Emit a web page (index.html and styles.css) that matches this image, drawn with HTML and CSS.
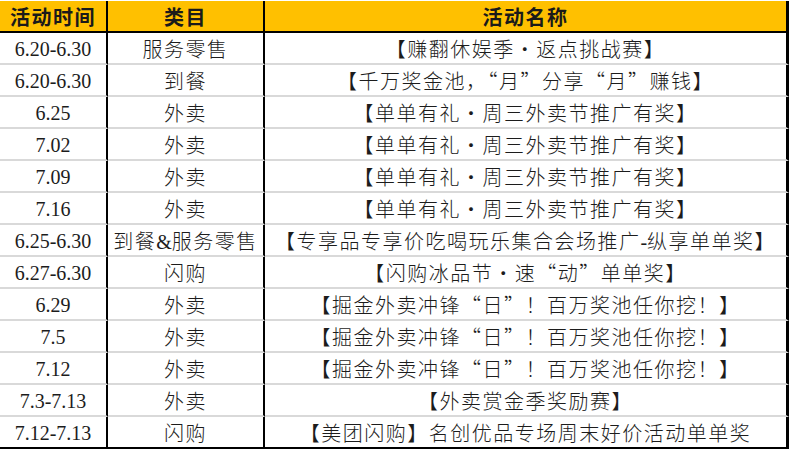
FILE: index.html
```html
<!DOCTYPE html>
<html lang="zh-CN">
<head>
<meta charset="utf-8">
<link rel="stylesheet" href="styles.css">
</head>
<body>
<table class="sheet">
  <thead>
    <tr>
      <th class="c1">活动时间</th>
      <th class="c2">类目</th>
      <th class="c3">活动名称</th>
    </tr>
  </thead>
  <tbody>
    <tr><td class="c1">6.20-6.30</td><td class="c2">服务零售</td><td class="c3">【赚翻休娱季·返点挑战赛】</td></tr>
    <tr><td class="c1">6.20-6.30</td><td class="c2">到餐</td><td class="c3">【千万奖金池，“月”分享“月”赚钱】</td></tr>
    <tr><td class="c1">6.25</td><td class="c2">外卖</td><td class="c3">【单单有礼·周三外卖节推广有奖】</td></tr>
    <tr><td class="c1">7.02</td><td class="c2">外卖</td><td class="c3">【单单有礼·周三外卖节推广有奖】</td></tr>
    <tr><td class="c1">7.09</td><td class="c2">外卖</td><td class="c3">【单单有礼·周三外卖节推广有奖】</td></tr>
    <tr><td class="c1">7.16</td><td class="c2">外卖</td><td class="c3">【单单有礼·周三外卖节推广有奖】</td></tr>
    <tr><td class="c1">6.25-6.30</td><td class="c2">到餐<span class="latin">&amp;</span>服务零售</td><td class="c3">【专享品专享价吃喝玩乐集合会场推广<span class="latin">-</span>纵享单单奖】</td></tr>
    <tr><td class="c1">6.27-6.30</td><td class="c2">闪购</td><td class="c3">【闪购冰品节·速“动”单单奖】</td></tr>
    <tr><td class="c1">6.29</td><td class="c2">外卖</td><td class="c3">【掘金外卖冲锋“日”！百万奖池任你挖！】</td></tr>
    <tr><td class="c1">7.5</td><td class="c2">外卖</td><td class="c3">【掘金外卖冲锋“日”！百万奖池任你挖！】</td></tr>
    <tr><td class="c1">7.12</td><td class="c2">外卖</td><td class="c3">【掘金外卖冲锋“日”！百万奖池任你挖！】</td></tr>
    <tr><td class="c1">7.3-7.13</td><td class="c2">外卖</td><td class="c3">【外卖赏金季奖励赛】</td></tr>
    <tr class="last"><td class="c1">7.12-7.13</td><td class="c2">闪购</td><td class="c3">【美团闪购】名创优品专场周末好价活动单单奖</td></tr>
  </tbody>
</table>
</body>
</html>
```
FILE: styles.css
```css
html, body {
  margin: 0;
  padding: 0;
  background: #ffffff;
}
body {
  padding-top: 1px;
}
.sheet {
  width: 789px;
  border-collapse: separate;
  border-spacing: 0;
  table-layout: fixed;
  color: #1c1c1c;
}
.sheet th,
.sheet td {
  padding: 2px 0 0 0;
  text-align: center;
  white-space: nowrap;
  overflow: hidden;
  line-height: 1;
  vertical-align: middle;
}
.sheet th {
  background: #ffc000;
  height: 28px;
  border-bottom: 2px solid #000;
  font-family: "Noto Sans CJK SC", sans-serif;
  font-weight: 700;
  font-size: 20px;
  letter-spacing: 1.5px;
  color: #1a1a1a;
}
.sheet td {
  height: 28px;
  border-bottom: 2px solid #d9d9d9;
  font-family: "Noto Sans CJK SC", sans-serif;
  font-weight: 300;
  font-size: 20px;
  letter-spacing: 1.5px;
}
.sheet .last td {
  border-bottom: 2px solid #000;
}
.sheet .c1 {
  width: 106px;
  border-right: 2px solid #000;
}
.sheet td.c1 {
  font-family: "Liberation Serif", serif;
  font-weight: 400;
  font-size: 20px;
  letter-spacing: 0;
}
.sheet .c2 {
  width: 155px;
  border-right: 2px solid #000;
}
.sheet .c3 {
  border-right: 3px solid #000;
}
.latin {
  font-family: "Liberation Serif", serif;
  font-weight: 400;
  letter-spacing: 0;
}
```
